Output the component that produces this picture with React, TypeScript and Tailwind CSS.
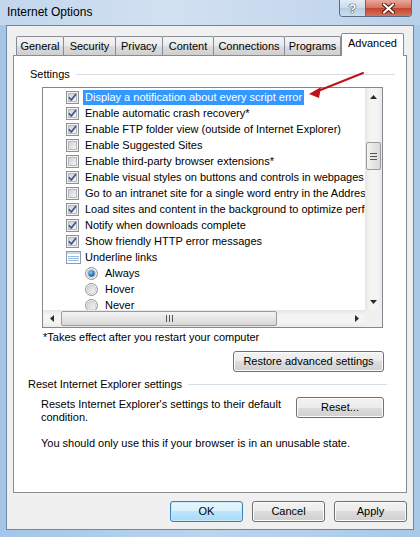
import React from "react"

type Item =
  | { kind: "check"; label: string; checked: boolean; selected?: boolean }
  | { kind: "group"; label: string }
  | { kind: "radio"; label: string; checked: boolean }

const items: Item[] = [
  { kind: "check", label: "Display a notification about every script error", checked: true, selected: true },
  { kind: "check", label: "Enable automatic crash recovery*", checked: true },
  { kind: "check", label: "Enable FTP folder view (outside of Internet Explorer)", checked: true },
  { kind: "check", label: "Enable Suggested Sites", checked: false },
  { kind: "check", label: "Enable third-party browser extensions*", checked: false },
  { kind: "check", label: "Enable visual styles on buttons and controls in webpages", checked: true },
  { kind: "check", label: "Go to an intranet site for a single word entry in the Address bar", checked: false },
  { kind: "check", label: "Load sites and content in the background to optimize performance", checked: true },
  { kind: "check", label: "Notify when downloads complete", checked: true },
  { kind: "check", label: "Show friendly HTTP error messages", checked: true },
  { kind: "group", label: "Underline links" },
  { kind: "radio", label: "Always", checked: true },
  { kind: "radio", label: "Hover", checked: false },
  { kind: "radio", label: "Never", checked: false },
]

const tabs = [
  { label: "General", w: "w-[48px]" },
  { label: "Security", w: "w-[53px]" },
  { label: "Privacy", w: "w-[48px]" },
  { label: "Content", w: "w-[52px]" },
  { label: "Connections", w: "w-[72px]" },
  { label: "Programs", w: "w-[57px]" },
]

function CheckBox({ checked }: { checked: boolean }) {
  return (
    <svg width="13" height="13" viewBox="0 0 13 13" className="shrink-0">
      <defs>
        <linearGradient id="cbIn" x1="0" y1="0" x2="1" y2="1">
          <stop offset="0" stopColor="#cbcfd5" />
          <stop offset="1" stopColor="#f6f6f6" />
        </linearGradient>
      </defs>
      <rect x="0.5" y="0.5" width="12" height="12" fill="#f4f4f4" stroke="#8e8f8f" />
      <rect x="2.5" y="2.5" width="8" height="8" fill="url(#cbIn)" stroke="#b5b8bd" />
      {checked && (
        <path d="M3 6.3 L5.3 9 L10 3" fill="none" stroke="#3d5490" strokeWidth="1.7" strokeLinejoin="round" />
      )}
    </svg>
  )
}

function Radio({ checked }: { checked: boolean }) {
  return (
    <svg width="13" height="13" viewBox="0 0 13 13" className="shrink-0">
      <defs>
        <linearGradient id="rdIn" x1="0" y1="0" x2="1" y2="1">
          <stop offset="0" stopColor="#cdd0d4" />
          <stop offset="1" stopColor="#f7f7f7" />
        </linearGradient>
        <radialGradient id="rdDot" cx="0.4" cy="0.35" r="0.7">
          <stop offset="0" stopColor="#8fd0f6" />
          <stop offset="0.6" stopColor="#2a7cc4" />
          <stop offset="1" stopColor="#1b4f8d" />
        </radialGradient>
      </defs>
      <circle cx="6.5" cy="6.5" r="6" fill="#f5f5f5" stroke="#8e8f8f" />
      <circle cx="6.5" cy="6.5" r="4.3" fill="url(#rdIn)" stroke="#c2c5c9" strokeWidth="0.8" />
      {checked && <circle cx="6.5" cy="6.5" r="3.2" fill="url(#rdDot)" />}
    </svg>
  )
}

function GroupIcon() {
  return (
    <svg width="15" height="13" viewBox="0 0 15 13" className="shrink-0">
      <rect x="0.5" y="0.5" width="14" height="12" fill="#ffffff" stroke="#8d99ab" />
      <rect x="1" y="1" width="13" height="2" fill="#c7d7ec" />
      <line x1="2" y1="5.5" x2="13" y2="5.5" stroke="#9bb9e0" />
      <line x1="2" y1="7.5" x2="13" y2="7.5" stroke="#9bb9e0" />
      <line x1="2" y1="9.5" x2="13" y2="9.5" stroke="#9bb9e0" />
    </svg>
  )
}

function Arrow({ dir }: { dir: "up" | "down" | "left" | "right" }) {
  const pts = {
    up: "3.5,0 7,4 0,4",
    down: "0,0 7,0 3.5,4",
    left: "0,3.5 4,0 4,7",
    right: "0,0 4,3.5 0,7",
  }[dir]
  const horiz = dir === "left" || dir === "right"
  return (
    <div className="w-[17px] h-[17px] flex items-center justify-center shrink-0">
      <svg width={horiz ? 4 : 7} height={horiz ? 7 : 4}>
        <polygon points={pts} fill="#2b2b2b" />
      </svg>
    </div>
  )
}

function WinButton({ label, primary, className = "" }: { label: string; primary?: boolean; className?: string }) {
  return (
    <div
      className={
        "h-[21px] rounded-[3px] border flex items-center justify-center text-[11px] text-black " +
        (primary
          ? "border-[#3c7fb1] bg-[linear-gradient(#eaf6fd_0%,#d9f0fc_50%,#bee6fd_50%,#a7d9f5_100%)] shadow-[inset_0_0_0_1px_#c9e8f8] "
          : "border-[#707070] bg-[linear-gradient(#f2f2f2_0%,#ebebeb_50%,#dddddd_50%,#cfcfcf_100%)] shadow-[inset_0_0_0_1px_#fcfcfc] ") +
        className
      }
    >
      {label}
    </div>
  )
}

function SettingsList() {
  return (
    <div className="ml-[28px] w-[341px] h-[241px] border border-[#828790] bg-white flex flex-col">
      <div className="flex h-[222px]">
        <div className="w-[322px] h-[222px] overflow-hidden pt-[1px]">
          {items.map((it, i) => {
            if (it.kind === "radio") {
              return (
                <div key={i} className="h-[16px] flex items-center pl-[42px] whitespace-nowrap">
                  <Radio checked={it.checked} />
                  <span className="ml-[5px] px-[2px] leading-[15px]">{it.label}</span>
                </div>
              )
            }
            return (
              <div key={i} className="h-[16px] flex items-center pl-[23px] whitespace-nowrap">
                {it.kind === "check" ? <CheckBox checked={it.checked} /> : <GroupIcon />}
                <span
                  className={
                    "px-[2px] leading-[15px] h-[15px] " +
                    (it.kind === "group" ? "ml-[2px] " : "ml-[4px] ") +
                    (it.kind === "check" && it.selected ? "bg-[#3399ff] text-white" : "")
                  }
                >
                  {it.label}
                </span>
              </div>
            )
          })}
        </div>
        {/* vertical scrollbar */}
        <div className="w-[17px] h-[222px] bg-[linear-gradient(90deg,#e6e6e6,#f4f4f4_30%,#f4f4f4_70%,#e9e9e9)] flex flex-col">
          <Arrow dir="up" />
          <div className="flex-1 flex flex-col">
            <div className="h-[37px]" />
            <div className="mx-[1px] h-[28px] rounded-[2px] border border-[#9b9b9b] bg-[linear-gradient(90deg,#f3f3f3,#e6e6e6_50%,#d8d8d8)] flex flex-col items-center justify-center gap-[2px]">
              <div className="w-[7px] h-px bg-[#555]" />
              <div className="w-[7px] h-px bg-[#555]" />
              <div className="w-[7px] h-px bg-[#555]" />
            </div>
          </div>
          <Arrow dir="down" />
        </div>
      </div>
      {/* horizontal scrollbar */}
      <div className="flex h-[17px]">
        <div className="w-[322px] h-[17px] bg-[linear-gradient(#e6e6e6,#f4f4f4_30%,#f4f4f4_70%,#e9e9e9)] flex">
          <Arrow dir="left" />
          <div className="ml-[1px] w-[216px] my-[1px] rounded-[2px] border border-[#9b9b9b] bg-[linear-gradient(#f3f3f3,#e6e6e6_50%,#d8d8d8)] flex items-center justify-center gap-[2px]">
            <div className="w-px h-[7px] bg-[#555]" />
            <div className="w-px h-[7px] bg-[#555]" />
            <div className="w-px h-[7px] bg-[#555]" />
          </div>
          <div className="flex-1" />
          <Arrow dir="right" />
        </div>
        <div className="w-[17px] h-[17px] bg-[#f0f0f0]" />
      </div>
    </div>
  )
}

export default function App() {
  return (
    <div className="relative w-[420px] h-[537px] overflow-hidden flex flex-col bg-[linear-gradient(90deg,#a3c6e8,#bcd4ec_50%,#a9c9e9)] text-[11px] text-black font-['Liberation_Sans',Arial,sans-serif]">
      {/* title bar */}
      <div className="h-[25px] flex items-start shrink-0 bg-[linear-gradient(90deg,#c2d6ec,#d2e1f1_40%,#c7d9ee_70%,#b9d0ea)]">
        <div className="pl-[7px] pt-[4px] text-[12px] leading-[16px]">Internet Options</div>
        <div className="flex-1" />
        <div className="mr-[8px] flex h-[17px] rounded-b-[4px] border border-t-0 border-[#5b6d85] overflow-hidden">
          <div className="w-[26px] h-full bg-[linear-gradient(#e3ecf6,#cbdaeb_50%,#b7cbe3_50%,#c9dcf0)] flex items-center justify-center border-r border-[#5b6d85]">
            <span className="text-[13px] font-bold leading-none text-white [text-shadow:0_0_1px_#303c4c,0_0_1px_#303c4c,0_0_1px_#303c4c]">?</span>
          </div>
          <div className="w-[45px] h-full bg-[linear-gradient(#e9a99b,#d4705e_50%,#c4412c_50%,#d2755b)] flex items-center justify-center">
            <svg width="13" height="11" viewBox="0 0 13 11">
              <path d="M2 1.5 L11 9.5 M11 1.5 L2 9.5" stroke="#4a1e16" strokeWidth="4" strokeLinecap="square" />
              <path d="M2 1.5 L11 9.5 M11 1.5 L2 9.5" stroke="#ffffff" strokeWidth="2" strokeLinecap="square" />
            </svg>
          </div>
        </div>
      </div>

      {/* window body */}
      <div className="mx-[6px] mb-[7px] h-[505px] border border-[#6f86a3] bg-[#f0f0f0] flex flex-col px-[6px] pt-[7px]">
        {/* tabs */}
        <div className="h-[22px] flex items-end pl-[3px] relative z-10">
          {tabs.map((t) => (
            <div
              key={t.label}
              className={
                t.w +
                " h-[19px] border border-b-0 border-[#898c95] -mr-px rounded-t-[2px] bg-[linear-gradient(#f3f3f3,#ebebeb_50%,#dddddd_50%,#cfcfcf)] flex items-center justify-center leading-none"
              }
            >
              {t.label}
            </div>
          ))}
          <div className="w-[63px] h-[23px] -mb-px ml-px border border-b-0 border-[#898c95] rounded-t-[2px] bg-white flex items-start justify-center pt-[4px] leading-none">
            Advanced
          </div>
        </div>

        {/* tab panel */}
        <div className="h-[438px] border border-[#898c95] bg-white flex flex-col">
          <div className="mt-[11px] h-[14px] flex items-center pl-[16px] mr-[11px]">
            <span className="leading-[14px]">Settings</span>
            <div className="flex-1 ml-[6px] h-px bg-[#d5dfe5]" />
          </div>

          <div className="mt-[6px]">
            <SettingsList />
          </div>

          <div className="mt-[2px] ml-[29px] h-[14px] leading-[14px]">*Takes effect after you restart your computer</div>

          <div className="mt-[7px] flex justify-end mr-[22px]">
            <WinButton label="Restore advanced settings" className="w-[151px]" />
          </div>

          <div className="mt-[5px] h-[14px] flex items-center pl-[14px] mr-[19px]">
            <span className="leading-[14px]">Reset Internet Explorer settings</span>
            <div className="flex-1 ml-[6px] h-px bg-[#d5dfe5]" />
          </div>

          <div className="mt-[6px] flex items-start ml-[27px] mr-[22px]">
            <div className="flex-1 leading-[13px] pt-[1px]">
              Resets Internet Explorer's settings to their default
              <br />
              condition.
            </div>
            <WinButton label="Reset..." className="w-[88px]" />
          </div>

          <div className="mt-[12px] ml-[27px] leading-[14px]">You should only use this if your browser is in an unusable state.</div>
        </div>

        {/* dialog buttons */}
        <div className="mt-[8px] flex justify-end gap-[9px]">
          <WinButton label="OK" primary className="w-[73px]" />
          <WinButton label="Cancel" className="w-[73px]" />
          <WinButton label="Apply" className="w-[73px]" />
        </div>
      </div>

      {/* red annotation arrow */}
      <svg className="absolute left-0 top-0 pointer-events-none" width="420" height="537">
        <line x1="363" y1="73" x2="318" y2="91" stroke="#c1121c" strokeWidth="2" strokeLinecap="round" />
        <polygon points="309,94 321,87 319,98" fill="#c1121c" />
      </svg>
    </div>
  )
}
